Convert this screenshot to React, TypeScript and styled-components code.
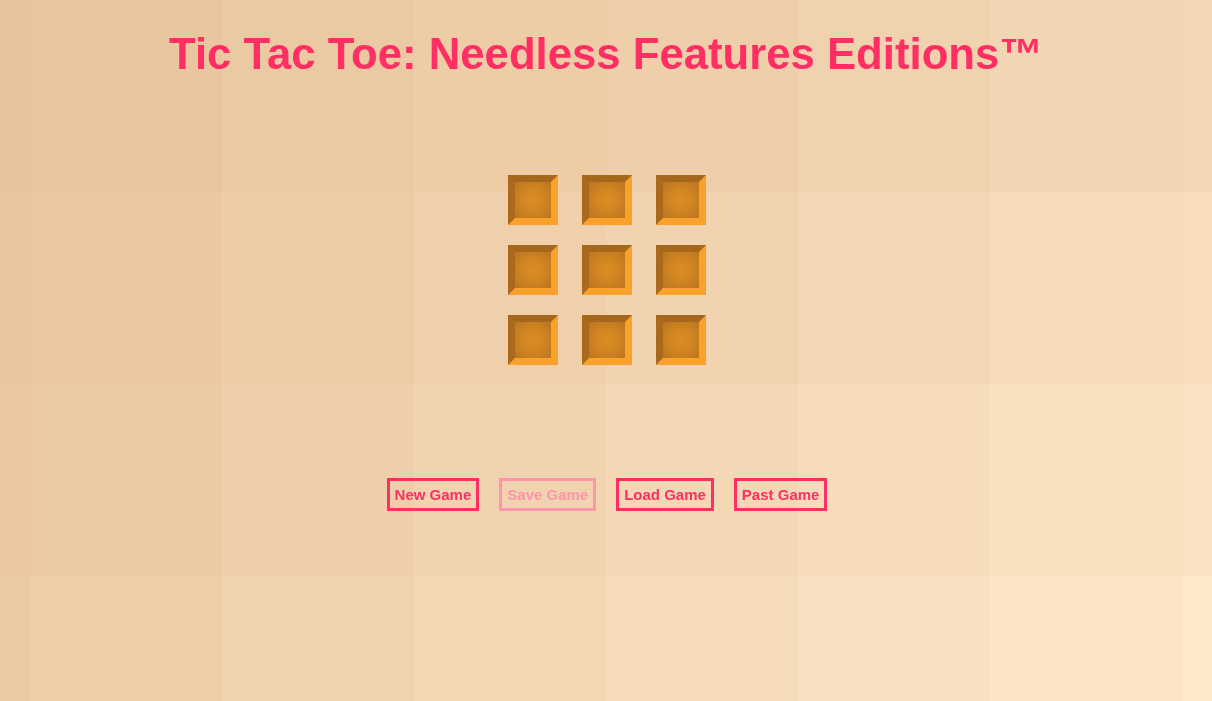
import React from 'react';
import styled, {createGlobalStyle} from 'styled-components';

const GlobalStyle = createGlobalStyle`
  html, body {
    margin: 0;
    padding: 0;
    background: #eed1ae;
  }
  body {
    font-family: "Liberation Sans", Arial, sans-serif;
  }
`;

// background is a coarse stepped gradient, light towards the bottom right
const COLS = [0, 30, 222, 414, 606, 798, 990, 1182, 1212];
const ROWS = [0, 192, 384, 576, 701];
const TL = [232, 196, 156];
const TR = [243, 215, 180];
const BL = [236, 202, 163];
const BR = [253, 232, 202];

function tileColor(u: number, v: number) {
  const c = TL.map((tl, k) => {
    const top = tl + (TR[k] - tl) * u;
    const bottom = BL[k] + (BR[k] - BL[k]) * u;
    return Math.round(top + (bottom - top) * v);
  });
  return `rgb(${c[0]}, ${c[1]}, ${c[2]})`;
}

const Backdrop = styled.svg`
  position: fixed;
  inset: 0;
  width: 100%;
  height: 100%;
  z-index: 0;
`;

function TiledBackdrop() {
  const tiles: React.ReactNode[] = [];
  const cxFirst = (COLS[0] + COLS[1]) / 2;
  const cxLast = (COLS[COLS.length - 2] + COLS[COLS.length - 1]) / 2;
  const cyFirst = (ROWS[0] + ROWS[1]) / 2;
  const cyLast = (ROWS[ROWS.length - 2] + ROWS[ROWS.length - 1]) / 2;
  for (let j = 0; j < ROWS.length - 1; j++) {
    for (let i = 0; i < COLS.length - 1; i++) {
      const cx = (COLS[i] + COLS[i + 1]) / 2;
      const cy = (ROWS[j] + ROWS[j + 1]) / 2;
      const u = (cx - cxFirst) / (cxLast - cxFirst);
      const v = (cy - cyFirst) / (cyLast - cyFirst);
      tiles.push(
        <rect
          key={`${i}-${j}`}
          x={COLS[i]}
          y={ROWS[j]}
          width={COLS[i + 1] - COLS[i]}
          height={ROWS[j + 1] - ROWS[j]}
          fill={tileColor(u, v)}
        />
      );
    }
  }
  return (
    <Backdrop viewBox="0 0 1212 701" preserveAspectRatio="none">
      {tiles}
    </Backdrop>
  );
}

const Page = styled.div`
  position: relative;
  z-index: 1;
  min-height: 701px;
  display: flex;
  flex-direction: column;
  align-items: center;
  padding-top: 28px;
  box-sizing: border-box;
`;

const Title = styled.h1`
  margin: 0;
  font-size: 43.7px;
  line-height: 51px;
  font-weight: bold;
  color: #ff2e63;
  white-space: nowrap;
`;

const Board = styled.div`
  margin-top: 96px;
  margin-left: 2px;
  display: grid;
  grid-template-columns: repeat(3, 50px);
  column-gap: 24px;
  row-gap: 20px;
`;

const Square = styled.button`
  width: 50px;
  height: 50px;
  padding: 0;
  box-sizing: border-box;
  border-style: solid;
  border-width: 7px;
  border-color: #a4671c #f9a12b #f9a12b #a96a1d;
  background: radial-gradient(circle, #dc8d24 0%, #d18522 45%, #b9751f 100%);
  cursor: pointer;
`;

const Controls = styled.div`
  margin-top: 113px;
  margin-left: 2px;
  display: flex;
  gap: 20px;
`;

const ControlButton = styled.button<{$disabled?: boolean}>`
  padding: 5px 5px;
  border: 3px solid ${p => (p.$disabled ? '#ff94aa' : '#ff2e63')};
  background: transparent;
  color: ${p => (p.$disabled ? '#ff94aa' : '#ff2e63')};
  font-family: "Liberation Sans", Arial, sans-serif;
  font-size: 15px;
  line-height: 17px;
  font-weight: bold;
  cursor: ${p => (p.$disabled ? 'default' : 'pointer')};
`;

const controls = [
  {label: 'New Game', disabled: false},
  {label: 'Save Game', disabled: true},
  {label: 'Load Game', disabled: false},
  {label: 'Past Game', disabled: false},
];

export default function App() {
  return (
    <>
      <GlobalStyle />
      <TiledBackdrop />
      <Page>
        <Title>Tic Tac Toe: Needless Features Editions™</Title>
        <Board>
          {Array.from({length: 9}, (_, i) => (
            <Square key={i} aria-label={`cell ${i + 1}`} />
          ))}
        </Board>
        <Controls>
          {controls.map(c => (
            <ControlButton key={c.label} $disabled={c.disabled}>
              {c.label}
            </ControlButton>
          ))}
        </Controls>
      </Page>
    </>
  );
}
